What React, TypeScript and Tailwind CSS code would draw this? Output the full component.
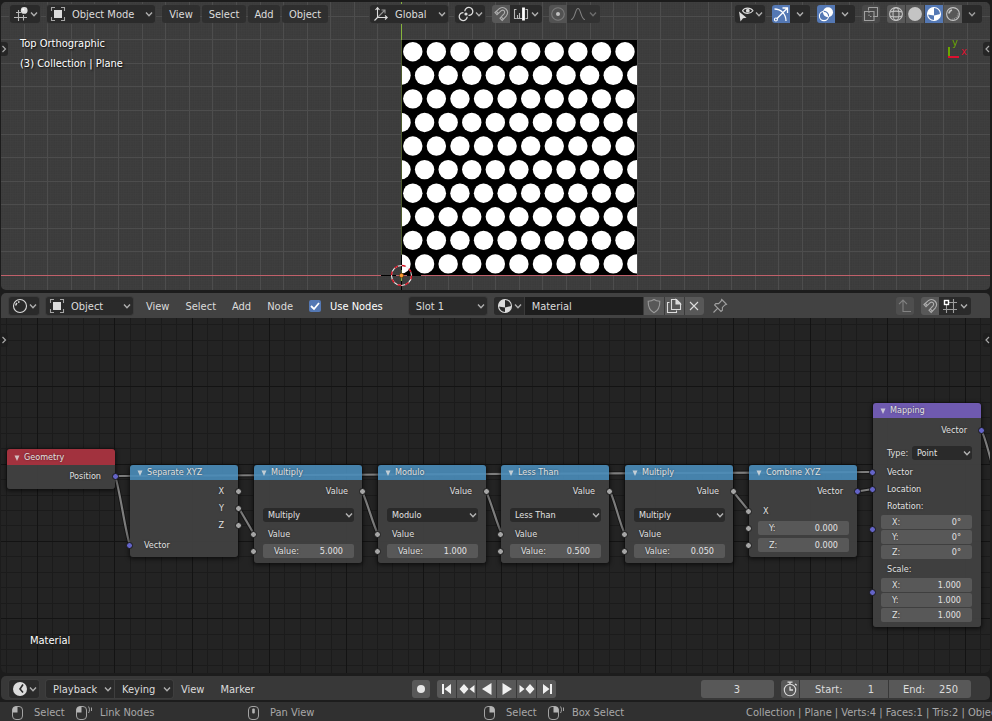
import type { ReactNode } from "react";

/* ---------- icons ---------- */

function Icon({ children, className = "" }: { children: ReactNode; className?: string }) {
  return (
    <svg
      viewBox="0 0 16 16"
      fill="none"
      stroke="currentColor"
      strokeWidth="1.1"
      className={`h-4 w-4 shrink-0 ${className}`}
      aria-hidden="true"
    >
      {children}
    </svg>
  );
}

function Chevron({ className = "" }: { className?: string }) {
  return (
    <svg
      viewBox="0 0 8 8"
      fill="none"
      stroke="currentColor"
      strokeWidth="1.4"
      className={`pointer-events-none h-2 w-2 shrink-0 opacity-75 ${className}`}
      aria-hidden="true"
    >
      <path d="M1 2.5 4 5.7 7 2.5" />
    </svg>
  );
}

const ViewEditorIcon = () => (
  <Icon>
    <path d="M5.5 4v11M1 11.5h13M3 6.5h5M10.500 9v5.500" opacity=".8" />
    <circle cx="11.2" cy="4.4" r="3.4" fill="currentColor" stroke="none" />
    <circle cx="10.2" cy="3.4" r="1" fill="#fff" stroke="none" />
  </Icon>
);
const ObjectIcon = () => (
  <Icon>
    <path d="M1.5 5V1.5H5M11 1.5h3.5V5M14.5 11v3.5H11M5 14.5H1.5V11" opacity=".7" />
    <rect x="4" y="4" width="8" height="8" fill="currentColor" stroke="none" />
  </Icon>
);
const AxesIcon = () => (
  <Icon>
    <path d="M4.5 2v9.5H14M2.5 4l2-2.4 2 2.4M12 9.5l2.2 2-2.2 2M4.5 11.5l-3 3" />
    <path d="M5 11 11.5 4.5M8.5 4h3.5v3.5" opacity=".6" />
  </Icon>
);
const PivotIcon = () => (
  <Icon>
    <path d="M5.500 6.600A4 4 0 1 0 9.200 10.800" strokeWidth="1.300" />
    <path d="M10.500 9.400A4 4 0 1 0 6.800 5.200" strokeWidth="1.300" />
    <circle cx="8" cy="8" r="1.600" fill="currentColor" stroke="none" />
  </Icon>
);
const MagnetIcon = () => (
  <Icon>
    <path
      d="M2 6.5 6.6 2.4C11.6-.4 16.8 5 13.4 9.8L9.2 14.4 7 12.2l4-4.4c1.7-2.4-.8-4.8-3-3L4 8.6ZM3.3 5.4l2 2.1M8.2 10.9l2.2 2.2"
      opacity=".65"
    />
  </Icon>
);
const IncrementIcon = () => (
  <Icon>
    <path d="M3.5 3.5h-2v9h2M12.500 3.500h2v9h-2" opacity=".8" />
    <path d="M3.500 12.500H9M4.500 12V9M6.500 12V7" opacity=".8" />
    <path d="M10.500 1.500v13" strokeWidth="2.800" stroke="#fff" />
  </Icon>
);
const PropEditIcon = () => (
  <Icon>
    <circle cx="8" cy="8" r="6.3" opacity=".3" />
    <circle cx="8" cy="8" r="2" fill="currentColor" stroke="none" opacity=".8" />
  </Icon>
);
const FalloffIcon = () => (
  <Icon>
    <path d="M1 13.5C5.2 13.5 5 2.5 8 2.5s2.800 11 7 11" />
  </Icon>
);
const VisibilityIcon = () => (
  <Icon>
    <path d="M4.500 4.700C6.500 1.200 12.500 1.200 15 4.700c-2.500 3.500-8.500 3.500-10.500 0Z" />
    <circle cx="9.800" cy="4.700" r="1.900" fill="currentColor" stroke="none" />
    <path d="m1 5.500 1.500 10L5 12.200l3.600-.4Z" fill="currentColor" stroke="none" />
  </Icon>
);
const GizmoIcon = () => (
  <Icon>
    <path d="M1.500 3C8 3 13 8 13 15M3.800 12.800 14 2.500M9.500 2H14.500V7" strokeWidth="1.300" />
    <circle cx="2.900" cy="13.500" r="1.500" />
  </Icon>
);
const OverlayIcon = () => (
  <Icon>
    <circle cx="10" cy="6.200" r="5" fill="currentColor" stroke="none" />
    <circle cx="6" cy="10" r="4.600" />
    <path d="M5.800 5.400a4.600 4.600 0 0 1 4.800 5" stroke="#5478b4" />
  </Icon>
);
const XrayIcon = () => (
  <Icon>
    <path d="M5.500 1.500h9v9h-3M5.500 1.500v3M1.500 5.500h9.500v9H1.500Z" />
    <path d="M6 5.500v5h5" strokeDasharray="1.500 1.500" />
  </Icon>
);
const WireSphereIcon = () => (
  <Icon>
    <circle cx="8" cy="8" r="6.400" />
    <ellipse cx="8" cy="8" rx="3" ry="6.400" />
    <path d="M1.800 6c3.500-1 9-1 12.400 0M1.800 10c3.500 1 9 1 12.400 0" />
  </Icon>
);
const SolidSphereIcon = () => (
  <Icon>
    <circle cx="8" cy="8" r="6.900" fill="currentColor" stroke="none" />
  </Icon>
);
const MaterialIcon = () => (
  <Icon>
    <circle cx="8" cy="8" r="6.500" />
    <path d="M8 1.500A6.500 6.500 0 0 0 1.600 8.500L8 9.500ZM8 9.500 14.400 8A6.500 6.500 0 0 1 8 14.500Z" fill="currentColor" stroke="none" />
  </Icon>
);
const RenderedIcon = () => (
  <Icon>
    <circle cx="8" cy="8" r="6.400" />
    <path d="M4 7.500A4 4 0 0 1 7 4" strokeWidth="1.800" />
    <path d="M13 7.500A5.500 5.500 0 0 1 7.500 13" opacity=".6" strokeDasharray="1 1" strokeWidth="1.500" />
  </Icon>
);
const ShaderEditorIcon = () => (
  <Icon>
    <circle cx="8" cy="8" r="6.500" />
    <path d="M3.800 7.500A4.300 4.300 0 0 1 5 5M6 4.200l1.500-.5" strokeWidth="1.500" />
  </Icon>
);
const ShieldIcon = () => (
  <Icon>
    <path d="M8 1.500c1.700 1.300 3.700 1.700 5.800 1.700C14 8.500 12.300 12.500 8 14.700 3.700 12.500 2 8.500 2.200 3.200 4.300 3.200 6.300 2.800 8 1.500Z" opacity=".5" />
  </Icon>
);
const CopyIcon = () => (
  <Icon>
    <path d="M5.500 1.500h5l4 4v6h-9Z" />
    <path d="M10 1.500V6h4.500Z" fill="currentColor" />
    <path d="M3.500 4.500h-2v10h9v-2" />
  </Icon>
);
const CloseIcon = () => (
  <Icon>
    <path d="m4 4 8 8M12 4l-8 8" />
  </Icon>
);
const PinIcon = () => (
  <Icon className="text-[#a0a0a0]">
    <path d="m9.700 1.500 4.800 4.800-1.600.6-2.500 2.500v2.800L9 13.400 2.600 7l1.200-1.400h2.800l2.500-2.500ZM5.800 10.200 1.500 14.500" />
  </Icon>
);
const ParentIcon = () => (
  <Icon className="text-[#828282]">
    <path d="M6 2v11.500h8M2 6.200 6 2l4 4.200" />
  </Icon>
);
const GridSnapIcon = () => (
  <Icon>
    <path d="M4.500 7v8M11.500 1v14M1 11.500h14M7 4.500h8" opacity=".65" />
    <rect x="2.500" y="2.500" width="4" height="4" stroke="#fff" strokeWidth="1.400" />
  </Icon>
);
const TimelineIcon = () => (
  <Icon>
    <circle cx="8" cy="8" r="7" fill="currentColor" stroke="none" />
    <path d="M11 3.500 8 8l3 3.500" stroke="#2a2a2a" strokeWidth="1.600" />
  </Icon>
);
const StopwatchIcon = () => (
  <Icon>
    <circle cx="8" cy="9" r="5.700" />
    <path d="M8 5.500V9h3M8 3V1M5.500 1.200h5M13 3l1.800 1.300" strokeWidth="1.300" />
  </Icon>
);

function MouseIcon({ button, drag }: { button: "left" | "middle" | "right"; drag?: boolean }) {
  return (
    <svg viewBox="0 0 18 16" fill="none" stroke="#a3a3a3" className="h-4 w-[18px] shrink-0" aria-hidden="true">
      <rect x="1.500" y="1.500" width="10" height="13" rx="3.500" />
      {button === "left" && <path d="M1.500 7.500V4A3 3 0 0 1 4.500 1.500H6.500V7.500Z" fill="#b5b5b5" stroke="none" />}
      {button === "right" && <path d="M11.500 7.500V4a3 3 0 0 0-3-2.500H6.500V7.500Z" fill="#b5b5b5" stroke="none" />}
      {button === "middle" && <rect x="5.200" y="3.500" width="2.600" height="5" rx="1" fill="#b5b5b5" stroke="none" />}
      {drag && <path d="M13.500 1.500c1.300 2 1.300 4.500 0 6.500M16.500 2.500v3.500" />}
    </svg>
  );
}

/* ---------- shared controls ---------- */

function IconMenu({ label, children, className = "" }: { label: string; children: ReactNode; className?: string }) {
  return (
    <button
      aria-label={label}
      className={`flex h-[18px] w-[30px] items-center justify-between rounded-[3px] bg-[#2a2a2a] pr-[2px] pl-[3px] shadow-[0_0_0_1px_#3c3c3c] ${className}`}
    >
      {children}
      <Chevron />
    </button>
  );
}

function Picker({ label, value, icon, className }: { label: string; value: string; icon?: ReactNode; className: string }) {
  return (
    <label className={`relative flex h-[18px] items-center rounded-[3px] bg-[#2a2a2a] shadow-[0_0_0_1px_#3c3c3c] ${className}`}>
      {icon}
      <select aria-label={label} className={`absolute inset-0 h-full w-full appearance-none bg-transparent pt-[2px] ${icon ? "pl-[25px]" : "pl-[7px]"}`}>
        <option>{value}</option>
      </select>
      <Chevron className="absolute right-[2px]" />
    </label>
  );
}

function RegionTab({ side }: { side: "left" | "right" }) {
  return (
    <button
      aria-label={side === "left" ? "Show toolbar" : "Show sidebar"}
      className={`absolute flex h-[14px] w-[7px] items-center justify-center bg-[#1c1c1c]/70 text-[#a8a8a8] ${
        side === "left" ? "left-0 rounded-r-[3px]" : "right-0 rounded-l-[3px]"
      }`}
    >
      <svg viewBox="0 0 6 10" className="h-[10px] w-[6px]" fill="none" stroke="currentColor" strokeWidth="1.200">
        <path d={side === "left" ? "m.5 2 3 3-3 3" : "m5 2-3 3 3 3"} />
      </svg>
    </button>
  );
}

/* One-pixel grid lines, `step` apart, passing through (x, y). */
function gridPath(x: number, y: number, step: number, every = 0) {
  const out: string[] = [];
  for (let k = Math.ceil(-x / step); k * step + x < 2600; k++) {
    if (every && k % every === 0) continue;
    out.push(`M${Math.floor(x + k * step) + 0.5} 0V1600`);
  }
  for (let k = Math.ceil(-y / step); k * step + y < 1600; k++) {
    if (every && k % every === 0) continue;
    out.push(`M0 ${Math.floor(y + k * step) + 0.5}H2600`);
  }
  return out.join("");
}

/* ---------- 3D viewport ---------- */

const UNIT = 23.58;
const PLANE = { x: 400, y: 38, size: 236 };
const UNIT_GRID = gridPath(400.5, 273.5, UNIT);

function ViewportScene() {
  const rows = Array.from({ length: 10 }, (_, r) => r);
  return (
    <svg className="absolute inset-0 h-full w-full" aria-hidden="true">
      <defs>
        <pattern id="fine" x="400.500" y="273.500" width="2.358" height="2.358" patternUnits="userSpaceOnUse">
          <path d="M0 .5h2.358M.5 0v2.358" stroke="#424242" strokeWidth=".4" />
        </pattern>
        <clipPath id="plane">
          <rect x={PLANE.x} y={PLANE.y} width={PLANE.size} height={PLANE.size} />
        </clipPath>
      </defs>
      <rect width="100%" height="100%" fill="#3a3a3a" />
      <rect width="100%" height="100%" fill="url(#fine)" />
      <path d={UNIT_GRID} stroke="#4d4d4d" />
      <path d="M400.500 0V288" stroke="#86b43c" />
      <rect x={PLANE.x} y={PLANE.y} width={PLANE.size} height={PLANE.size} fill="#000" />
      <g clipPath="url(#plane)" fill="#fff">
        {rows.map((r) =>
          Array.from({ length: 11 }, (_, c) => (
            <circle key={`${r}-${c}`} cx={PLANE.x + c * UNIT + (r % 2 ? 0 : UNIT / 2)} cy={PLANE.y + 11.7 + r * UNIT} r="9.700" />
          )),
        )}
      </g>
      <path d="M400.500 38V273" stroke="#4c5a2c" />
      <line x1="0" x2="100%" y1="273.500" y2="273.500" stroke="#c0606a" />
      <path d="M380 273.500h15M406 273.500h14M400.500 253v15M400.500 279v9" stroke="#000" />
      <circle cx="400.500" cy="273.500" r="10" fill="none" stroke="#f0f0f0" strokeWidth="1.100" />
      <circle cx="400.500" cy="273.500" r="10" fill="none" stroke="#d81020" strokeWidth="1.400" strokeDasharray="3.930" />
      <circle cx="400.500" cy="273.500" r="2.200" fill="#ff9a2e" stroke="#3a2000" strokeWidth=".6" />
    </svg>
  );
}

function Viewport() {
  const menu = "h-[18px] rounded-[3px] bg-[#2e2e2e]/90 pt-[2px] text-center";
  const lit = "flex h-[18px] w-[18px] items-center justify-center";
  return (
    <section className="relative h-[288px] shrink-0 overflow-hidden rounded-[5px]">
      <ViewportScene />
      <header className="relative flex pt-[3px] pr-2 pl-[9px] text-[#dcdcdc]">
        <IconMenu label="Editor type"><ViewEditorIcon /></IconMenu>
        <Picker label="Mode" value="Object Mode" icon={<span className="pl-[3px]"><ObjectIcon /></span>} className="ml-[7px] w-[108px]" />
        <nav className="ml-[7px] flex gap-[2px]">
          <button className={`${menu} w-[38px]`}>View</button>
          <button className={`${menu} w-[44px]`}>Select</button>
          <button className={`${menu} w-[32px]`}>Add</button>
          <button className={`${menu} w-[46px]`}>Object</button>
        </nav>
        <Picker label="Transform orientation" value="Global" icon={<span className="pl-[3px]"><AxesIcon /></span>} className="ml-[42px] w-[78px]" />
        <IconMenu label="Pivot point" className="ml-[7px]"><PivotIcon /></IconMenu>
        <div className="ml-[7px] flex overflow-hidden rounded-[3px]">
          <button aria-label="Snap" className={`${lit} bg-[#585858]`}><MagnetIcon /></button>
          <button aria-label="Snap options" className="flex h-[18px] w-[32px] items-center justify-between bg-[#2a2a2a] px-[3px]"><IncrementIcon /><Chevron /></button>
        </div>
        <div className="ml-[7px] flex overflow-hidden rounded-[3px]">
          <button aria-label="Proportional editing" className={`${lit} bg-[#525252]`}><PropEditIcon /></button>
          <button aria-label="Falloff" className="flex h-[18px] w-[33px] items-center justify-between bg-[#323232] px-[3px] text-[#808080]"><FalloffIcon /><Chevron /></button>
        </div>
        <div className="ml-auto flex gap-[7px]">
          <IconMenu label="Visibility"><VisibilityIcon /></IconMenu>
          <div className="flex overflow-hidden rounded-[3px]">
            <button aria-label="Gizmos" className={`${lit} bg-[#5478b4] text-white`}><GizmoIcon /></button>
            <button aria-label="Gizmo options" className="flex h-[18px] w-[20px] items-center justify-center bg-[#2a2a2a]"><Chevron /></button>
          </div>
          <div className="flex overflow-hidden rounded-[3px]">
            <button aria-label="Overlays" className={`${lit} bg-[#5478b4] text-white`}><OverlayIcon /></button>
            <button aria-label="Overlay options" className="flex h-[18px] w-[20px] items-center justify-center bg-[#2a2a2a]"><Chevron /></button>
          </div>
          <button aria-label="X-ray" className={`${lit} rounded-[3px] bg-[#484848] text-[#a0a0a0]`}><XrayIcon /></button>
          <div className="flex overflow-hidden rounded-[3px] text-[#c4c4c4]">
            <button aria-label="Wireframe" className={`${lit} bg-[#585858]`}><WireSphereIcon /></button>
            <button aria-label="Solid" className={`${lit} ml-px bg-[#585858]`}><SolidSphereIcon /></button>
            <button aria-label="Material preview" className={`${lit} ml-px bg-[#5478b4] text-white`}><MaterialIcon /></button>
            <button aria-label="Rendered" className={`${lit} ml-px bg-[#585858]`}><RenderedIcon /></button>
            <button aria-label="Shading options" className="flex h-[18px] w-[20px] items-center justify-center bg-[#2a2a2a]"><Chevron /></button>
          </div>
        </div>
      </header>
      <div className="relative mt-[11px] ml-[19px] leading-5 text-white [text-shadow:1px_1px_2px_#000]">
        <p>Top Orthographic</p>
        <p>(3) Collection | Plane</p>
      </div>
      <div className="absolute inset-x-0 top-[40px]">
        <RegionTab side="left" />
        <RegionTab side="right" />
      </div>
      <div className="absolute top-[35px] right-[20px] h-[24px] w-[22px]">
        <span className="absolute top-0 left-[4px] leading-3 text-[#6ba500]">y</span>
        <span className="absolute top-[9px] left-[13px] leading-3 text-[#dd1030]">x</span>
        <span className="absolute top-[10px] left-0 h-[10px] w-[2px] bg-[#6ba500]" />
        <span className="absolute top-[19px] left-0 h-[2px] w-[11px] bg-[#dd1030]" />
      </div>
    </section>
  );
}

/* ---------- node editor ---------- */

function Socket({ side, vector, className = "" }: { side: "in" | "out"; vector?: boolean; className?: string }) {
  return (
    <span
      className={`absolute h-[7px] w-[7px] rounded-full border border-[#171717] ${vector ? "bg-[#6464c8]" : "bg-[#a6a6a6]"} ${
        side === "in" ? "left-[-4px]" : "right-[-4px]"
      } ${className}`}
    />
  );
}

function Out({ children, vector }: { children: string; vector?: boolean }) {
  return (
    <div className="relative flex h-[17px] items-center justify-end pr-[14px] pb-[2px]">
      {children}
      <Socket side="out" vector={vector} className="top-[5px]" />
    </div>
  );
}

function In({ children, vector, noSocket, className = "" }: { children: string; vector?: boolean; noSocket?: boolean; className?: string }) {
  return (
    <div className={`relative flex h-[17px] items-center pb-[2px] pl-[14px] ${className}`}>
      {!noSocket && <Socket side="in" vector={vector} className="top-[5px]" />}
      {children}
    </div>
  );
}

function Field({ label, value }: { label: string; value: string }) {
  return (
    <label className="flex h-[14px] items-center rounded-[2px] bg-[#585858] px-[11px]">
      {label}
      <input defaultValue={value} className="w-0 min-w-0 flex-1 bg-transparent text-right outline-none" />
    </label>
  );
}

function SocketField({ label, value, className = "" }: { label: string; value: string; className?: string }) {
  return (
    <div className={`relative flex flex-col justify-center pr-2 pl-[9px] ${className}`}>
      <Socket side="in" />
      <Field label={label} value={value} />
    </div>
  );
}

function NodeSelect({ label, value, className = "" }: { label: string; value: string; className?: string }) {
  return (
    <span className={`relative flex h-[14px] items-center rounded-[3px] bg-[#2a2a2a] ${className}`}>
      <select aria-label={label} className="h-full w-full appearance-none bg-transparent pl-[5px] leading-[14px]">
        <option>{value}</option>
      </select>
      <Chevron className="absolute right-[1px]" />
    </span>
  );
}

function NodeBox({ title, tint, place, children }: { title: string; tint: string; place: string; children: ReactNode }) {
  return (
    <article className={`absolute w-[108px] rounded-[3px] shadow-[0_1px_4px_1px_rgba(0,0,0,0.6)] ${place}`}>
      <h2 className={`flex items-center rounded-t-[3px] pl-[7px] ${tint}`}>
        <svg viewBox="0 0 6 6" className="mt-[2px] mr-[4px] h-[6px] w-[6px]" aria-hidden="true">
          <path d="M.5 .5h5L3 6Z" fill="#e0e0e0" opacity=".8" />
        </svg>
        {title}
      </h2>
      <div className="rounded-b-[3px] bg-[#424242]/92">{children}</div>
    </article>
  );
}

const BLUE = "h-[15px] bg-[#4a8dba]/90 pb-[2px]";

function MathNode({ op, value, place }: { op: string; value: string; place: string }) {
  return (
    <NodeBox title={op} tint={BLUE} place={place}>
      <div className="pt-[3px] pb-[5px]">
        <Out>Value</Out>
        <div className="mt-2 pr-2 pl-[9px]">
          <NodeSelect label="Operation" value={op} />
        </div>
        <In className="mt-1">Value</In>
        <SocketField label="Value:" value={value} className="mt-px" />
      </div>
    </NodeBox>
  );
}

function VectorFields({ title, values }: { title: string; values: string[] }) {
  return (
    <fieldset className="relative">
      <In noSocket>{title}</In>
      <Socket side="in" vector className="top-[28px]" />
      <div className="flex flex-col gap-px overflow-hidden rounded-[2px] pr-[9px] pb-px pl-2">
        {values.map((v, i) => (
          <Field key={i} label={["X:", "Y:", "Z:"][i]} value={v} />
        ))}
      </div>
    </fieldset>
  );
}

const LINKS = [
  "M114 158L872 154",
  "M114 158C119 172 124 213 129 227",
  "M238 190.500L253 216",
  "M361 173.500C366 183 372 207 377 216",
  "M485 173.500C490 183 496 207 501 216",
  "M609 173.500C614 183 619 207 624 216",
  "M732 173.500L748 193",
  "M856 173.500L872 171",
  "M980 112C984 118 988 136 991 146",
];

const CELL = 15.46;
const CELL_GRID = gridPath(36.4, 68.8, CELL, 5);
const MAJOR_GRID = gridPath(36.4, 68.8, CELL * 5);

function NodeCanvas() {
  return (
    <div className="relative flex-1 overflow-hidden rounded-b-[5px] bg-[#232323] text-[9px] text-[#e2e2e2] [text-shadow:0_0_2px_rgba(0,0,0,0.5)]">
      <svg className="absolute inset-0 h-full w-full" aria-hidden="true">
        <path d={CELL_GRID} stroke="#1b1b1b" />
        <path d={MAJOR_GRID} stroke="#131313" />
        {LINKS.map((d) => (
          <g key={d} fill="none">
            <path d={d} stroke="#101010" strokeWidth="4" opacity=".7" />
            <path d={d} stroke="#7e7e7e" strokeWidth="2.200" />
          </g>
        ))}
      </svg>
      <div className="absolute inset-x-0 top-[15px]">
        <RegionTab side="left" />
        <RegionTab side="right" />
      </div>

      <NodeBox title="Geometry" tint="h-[16px] bg-[#aa3440]/95" place="left-[6px] top-[131px]">
        <div className="pt-[3px] pb-1">
          <Out vector>Position</Out>
        </div>
      </NodeBox>

      <NodeBox title="Separate XYZ" tint={BLUE} place="left-[129px] top-[147px]">
        <div className="py-[3px]">
          <Out>X</Out>
          <Out>Y</Out>
          <Out>Z</Out>
          <In vector className="mt-[3px]">Vector</In>
        </div>
      </NodeBox>

      <MathNode op="Multiply" value="5.000" place="left-[253px] top-[147px]" />
      <MathNode op="Modulo" value="1.000" place="left-[377px] top-[147px]" />
      <MathNode op="Less Than" value="0.500" place="left-[500px] top-[147px]" />
      <MathNode op="Multiply" value="0.050" place="left-[624px] top-[147px]" />

      <NodeBox title="Combine XYZ" tint={BLUE} place="left-[748px] top-[147px]">
        <div className="pt-[3px] pb-[5px]">
          <Out vector>Vector</Out>
          <In className="mt-[3px]">X</In>
          <SocketField label="Y:" value="0.000" className="mt-px" />
          <SocketField label="Z:" value="0.000" className="mt-[3px]" />
        </div>
      </NodeBox>

      <NodeBox title="Mapping" tint="h-[15px] bg-[#6f5ab0] pb-[2px]" place="left-[872px] top-[85px]">
        <div className="py-1">
          <Out vector>Vector</Out>
          <div className="mt-[7px] mb-1 flex h-[14px] items-center justify-between pr-[9px] pl-[14px]">
            Type:
            <NodeSelect label="Mapping type" value="Point" className="w-[60px]" />
          </div>
          <In vector>Vector</In>
          <In vector>Location</In>
          <VectorFields title="Rotation:" values={["0°", "0°", "0°"]} />
          <div className="h-px" />
          <VectorFields title="Scale:" values={["1.000", "1.000", "1.000"]} />
        </div>
      </NodeBox>

      <p className="absolute bottom-[22px] left-[29px] text-[11px] leading-5 text-white">Material</p>
    </div>
  );
}

function NodeEditor() {
  return (
    <section className="mt-[3px] flex min-h-0 flex-1 flex-col overflow-hidden rounded-[5px]">
      <header className="flex h-[25px] shrink-0 items-start bg-[#424242] pt-1 pr-[19px] pl-2 text-[#dcdcdc]">
        <IconMenu label="Editor type"><ShaderEditorIcon /></IconMenu>
        <Picker label="Shader type" value="Object" icon={<span className="pl-[3px]"><ObjectIcon /></span>} className="ml-[7px] w-[87px]" />
        <nav className="ml-[13px] flex h-[18px] gap-4">
          <button className="pt-[2px]">View</button>
          <button className="pt-[2px]">Select</button>
          <button className="pt-[2px]">Add</button>
          <button className="pt-[2px]">Node</button>
        </nav>
        <label className="ml-4 flex h-[18px] items-center gap-[9px] text-white">
          <span className="relative flex h-3 w-3">
            <input type="checkbox" defaultChecked className="h-3 w-3 appearance-none rounded-[2px] bg-[#5478b4]" />
            <svg viewBox="0 0 12 12" className="pointer-events-none absolute inset-0 h-3 w-3" fill="none" stroke="#fff" strokeWidth="1.800">
              <path d="m2 6 3 3 5-6" />
            </svg>
          </span>
          <span className="pt-[2px]">Use Nodes</span>
        </label>
        <Picker label="Material slot" value="Slot 1" className="ml-[26px] w-[78px]" />
        <div className="ml-[7px] flex gap-px overflow-hidden rounded-[3px] bg-[#3a3a3a]">
          <button aria-label="Browse materials" className="flex h-[18px] w-[30px] items-center justify-between bg-[#2a2a2a] pr-[2px] pl-[3px]"><MaterialIcon /><Chevron /></button>
          <input aria-label="Material name" defaultValue="Material" className="h-[18px] w-[118px] bg-[#1d1d1d] pt-px pl-[7px] outline-none" />
          <button aria-label="Fake user" className="flex h-[18px] w-[20px] items-center justify-center bg-[#585858]"><ShieldIcon /></button>
          <button aria-label="New material" className="flex h-[18px] w-[19px] items-center justify-center bg-[#585858]"><CopyIcon /></button>
          <button aria-label="Unlink material" className="flex h-[18px] w-[19px] items-center justify-center bg-[#585858]"><CloseIcon /></button>
        </div>
        <button aria-label="Pin" className="ml-2 flex h-[18px] items-center"><PinIcon /></button>
        <button aria-label="Parent node tree" className="ml-auto flex h-[18px] w-[18px] items-center justify-center rounded-[3px] bg-[#4e4e4e]"><ParentIcon /></button>
        <div className="ml-[7px] flex overflow-hidden rounded-[3px]">
          <button aria-label="Snap" className="flex h-[18px] w-[18px] items-center justify-center bg-[#585858]"><MagnetIcon /></button>
          <button aria-label="Snap target" className="flex h-[18px] w-[32px] items-center justify-between bg-[#2a2a2a] px-[3px]"><GridSnapIcon /><Chevron /></button>
        </div>
      </header>
      <NodeCanvas />
    </section>
  );
}

/* ---------- timeline ---------- */

const TRANSPORT: [string, string][] = [
  ["Jump to start", "M3 3h2v10H3ZM12 3v10L5.500 8Z"],
  ["Previous keyframe", "M5 3l4.500 5L5 13 .5 8ZM15.500 4v8L10.500 8Z"],
  ["Play reverse", "M12.500 2v12L3 8Z"],
  ["Play", "M3.500 2v12L13 8Z"],
  ["Next keyframe", "M11 3l4.500 5L11 13 6.500 8ZM.5 4v8L5.500 8Z"],
  ["Jump to end", "M11 3h2v10h-2ZM4 3v10L10.500 8Z"],
];

function NumberBox({ label, value, className }: { label: string; value: string; className: string }) {
  return (
    <label className={`flex h-[18px] items-center bg-[#585858] pt-[2px] ${className}`}>
      {label}
      <input defaultValue={value} className="w-0 min-w-0 flex-1 bg-transparent text-right outline-none" />
    </label>
  );
}

function Timeline() {
  return (
    <section className="mt-[3px] flex h-[24px] shrink-0 items-start rounded-[5px] bg-[#383838] pt-1 pr-[19px] pl-2 text-[#dcdcdc]">
      <IconMenu label="Editor type"><TimelineIcon /></IconMenu>
      <div className="ml-[7px] flex gap-px rounded-[3px] bg-[#3e3e3e] shadow-[0_0_0_1px_#3e3e3e]">
        <button className="flex h-[18px] w-[68px] items-center justify-between rounded-l-[3px] bg-[#2a2a2a] pr-[2px] pl-[7px]"><span className="pt-[2px]">Playback</span><Chevron /></button>
        <button className="flex h-[18px] w-[58px] items-center justify-between rounded-r-[3px] bg-[#2a2a2a] pr-[2px] pl-[7px]"><span className="pt-[2px]">Keying</span><Chevron /></button>
      </div>
      <nav className="ml-[8px] flex h-[18px] gap-4">
        <button className="pt-[2px]">View</button>
        <button className="pt-[2px]">Marker</button>
      </nav>
      <div className="mx-auto flex gap-[7px] pl-[13px]">
        <button aria-label="Auto keying" className="flex h-[18px] w-[18px] items-center justify-center rounded-[3px] bg-[#585858]">
          <span className="h-2 w-2 rounded-full bg-[#e6e6e6]" />
        </button>
        <div className="flex gap-px overflow-hidden rounded-[3px]">
          {TRANSPORT.map(([name, d]) => (
            <button key={name} aria-label={name} className="flex h-[18px] w-[19px] items-center justify-center bg-[#585858]">
              <svg viewBox="0 0 16 16" className="h-4 w-4" fill="#f0f0f0" aria-hidden="true"><path d={d} /></svg>
            </button>
          ))}
        </div>
      </div>
      <input aria-label="Current frame" defaultValue="3" className="h-[18px] w-[73px] rounded-[3px] bg-[#585858] pt-px pr-px text-center outline-none" />
      <div className="ml-[7px] flex gap-px overflow-hidden rounded-[3px]">
        <button aria-label="Use preview range" className="flex h-[18px] w-[18px] items-center justify-center bg-[#585858]"><StopwatchIcon /></button>
        <NumberBox label="Start:" value="1" className="w-[88px] pr-[14px] pl-[15px]" />
        <NumberBox label="End:" value="250" className="w-[82px] pr-[13px] pl-[14px]" />
      </div>
    </section>
  );
}

/* ---------- status bar ---------- */

function Hint({ button, drag, children, className }: { button: "left" | "middle" | "right"; drag?: boolean; children: string; className: string }) {
  return (
    <span className={`flex shrink-0 items-center pl-[11px] ${drag ? "gap-[7px]" : "gap-[5px]"} ${className}`}>
      <MouseIcon button={button} drag={drag} />
      {children}
    </span>
  );
}

function StatusBar() {
  return (
    <footer className="mt-[2px] flex h-[19px] shrink-0 items-center overflow-hidden bg-[#303030] pt-[2px] text-[#a8a8a8]">
      <div className="flex w-[746px] shrink-0 items-center">
        <Hint button="left" className="w-[64px]">Select</Hint>
        <Hint button="left" drag className="w-[172px]">Link Nodes</Hint>
        <Hint button="middle" className="w-[236px]">Pan View</Hint>
        <Hint button="right" className="w-[64px]">Select</Hint>
        <Hint button="right" drag className="">Box Select</Hint>
      </div>
      <span className="whitespace-nowrap">Collection | Plane | Verts:4 | Faces:1 | Tris:2 | Objects</span>
    </footer>
  );
}

export default function App() {
  return (
    <main className="flex h-screen min-h-[600px] w-full flex-col overflow-hidden bg-[#1c1c1c] pt-[2px] text-[11px] leading-4 [font-family:'DejaVu_Sans_Condensed','DejaVu_Sans',sans-serif]">
      <div className="flex min-h-0 flex-1 flex-col pr-[2px] pl-px">
        <Viewport />
        <NodeEditor />
        <Timeline />
      </div>
      <StatusBar />
    </main>
  );
}
